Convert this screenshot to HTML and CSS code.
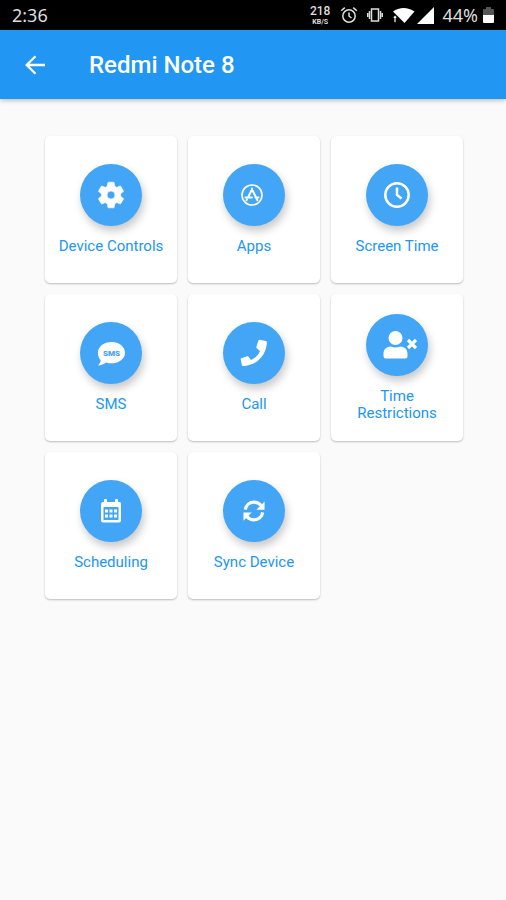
FILE: index.html
```html
<!DOCTYPE html>
<html lang="en">
<head>
<meta charset="utf-8">
<meta name="viewport" content="width=device-width, initial-scale=1">
<title>Redmi Note 8</title>
<link rel="stylesheet" href="styles.css">
</head>
<body>
<div class="status">
  <span class="clock">2:36</span>
  <div class="status-icons">
    <span class="speed"><b>218</b><small>KB/S</small></span>
    <svg class="alarm" width="18" height="18" viewBox="0 0 18 18" fill="none" stroke="#ddd" stroke-width="1.5"><circle cx="9" cy="10" r="6.2"/><path d="M9 6.5V10l2.500 2M1.200 4.800 4.800 1.600M16.800 4.800l-3.600-3.200"/></svg>
    <svg class="vibrate" width="16" height="18" viewBox="0 0 16 18" fill="none" stroke="#ddd" stroke-width="1.500"><rect x="4.500" y="3" width="7" height="12"/><path d="M2.500 5v8M13.500 5v8M.7 7v4M15.300 7v4"/></svg>
    <svg class="wifi" width="23" height="18" viewBox="0 0 23 18" fill="#fff"><path d="M1 5.500C7 .8 16 .8 22.500 5.500L12.500 17Z"/><path d="M3 9 5.500 12H4v4.500H2V12H.5Z" stroke="#000" stroke-width=".8"/></svg>
    <svg class="signal" width="17" height="17" viewBox="0 0 17 17" fill="#fff"><path d="M17 0v17H0Z"/></svg>
    <span class="percent">44%</span>
    <svg class="battery" width="11" height="18" viewBox="0 0 11 18"><path d="M3 1h5v2h2q1 0 1 1v6H0V4q0-1 1-1h2Z" fill="#555"/><path d="M0 9h11v7q0 1-1 1H1q-1 0-1-1Z" fill="#fff"/></svg>
  </div>
</div>
<header class="appbar">
  <button class="back" type="button" aria-label="Back"><svg width="22" height="22" viewBox="0 0 22 22" fill="none" stroke="#fff" stroke-width="2.300"><path d="M21 11H3M11.500 2.200 2.700 11l8.800 8.800"/></svg></button>
  <h1>Redmi Note 8</h1>
</header>
<main class="grid">
  <button class="card" type="button">
    <span class="disc"><svg width="32" height="32" viewBox="0 0 24 24" fill="#fff"><path d="M19.140 12.940c.04-.3.060-.61.060-.94s-.02-.64-.070-.94l2.030-1.580a.49.49 0 0 0 .12-.61l-1.920-3.320a.49.49 0 0 0-.59-.22l-2.390.96a7 7 0 0 0-1.620-.94L14.400 2.810a.48.48 0 0 0-.48-.41h-3.840a.47.47 0 0 0-.47.41l-.36 2.540a7.300 7.300 0 0 0-1.620.94l-2.390-.96a.48.48 0 0 0-.59.22L2.740 8.870a.47.47 0 0 0 .12.61l2.030 1.580a7 7 0 0 0 0 1.880l-2.030 1.580a.49.49 0 0 0-.12.61l1.920 3.320c.12.22.37.29.59.22l2.390-.96c.5.38 1.030.7 1.620.94l.36 2.540c.05.24.24.41.48.41h3.840c.24 0 .44-.17.47-.41l.36-2.540a7 7 0 0 0 1.620-.94l2.390.96c.22.080.47 0 .59-.22l1.920-3.320a.47.47 0 0 0-.12-.61ZM12 15a3 3 0 1 1 0-6 3 3 0 0 1 0 6Z" stroke="#fff" stroke-width=".5"/></svg></span>
    <span class="label">Device Controls</span>
  </button>
  <button class="card" type="button">
    <span class="disc apps"><svg width="24" height="24" viewBox="0 0 24 24" fill="none" stroke="#fff" stroke-linecap="round"><circle cx="12" cy="12" r="10" stroke-width="1.600"/><path d="M12 5.500v2M11.400 7.500 8 14.500M12.600 7.500l4 8M5.500 14.500h6.500M15.500 14.500h3M7 16.500l-.5.800M16.800 16.200l.6 1" stroke-width="2"/></svg></span>
    <span class="label">Apps</span>
  </button>
  <button class="card" type="button">
    <span class="disc"><svg width="28" height="28" viewBox="0 0 28 28" fill="none" stroke="#fff" stroke-width="2.500"><circle cx="14" cy="14" r="11.700"/><path d="M14 6.500V14l4.500 3.500"/></svg></span>
    <span class="label">Screen Time</span>
  </button>
  <button class="card" type="button">
    <span class="disc"><svg width="28" height="28" viewBox="0 0 28 28"><path d="M14.500 3C22 3 28 7.600 28 13.700S22 24.300 14.500 24.300c-2 0-3.900-.3-5.600-.9C6.800 25 4.100 26.300 1 26.500c1.400-1.500 2.500-3.300 2.800-5C2 19.400.9 17 .9 13.700.9 7.600 7 3 14.500 3Z" fill="#fff"/><text class="sms" x="14.500" y="16.500" text-anchor="middle">SMS</text></svg></span>
    <span class="label">SMS</span>
  </button>
  <button class="card" type="button">
    <span class="disc"><svg width="28" height="28" viewBox="0 0 28 28" fill="#fff"><path d="M18.500 1.300q.4-.9 1.200-.6l6.200 1.400q.9.200 1 1.100C26.500 16 16.500 27 3 27q-.9 0-1.100-.9L.7 20.500q-.2-.9.600-1.200l6-2q.8-.3 1.300.4l2.400 3.300c4.300-1.800 7.300-4.800 9-9L16.700 9.200q-.6-.6-.3-1.400Z"/></svg></span>
    <span class="label">Call</span>
  </button>
  <button class="card" type="button">
    <span class="disc"><svg class="user" width="34" height="28" viewBox="0 0 34 28" fill="#fff"><circle cx="12.500" cy="7" r="7"/><path d="M8 15.500q4.500 2 9 0c4.500 0 7.500 3 7.500 7.300v2.500q0 2.200-2.200 2.200H2.700Q.5 27.500.5 25.300v-2.500c0-4.300 3-7.300 7.500-7.300Z"/><path d="m25 9 8 8m0-8-8 8" stroke="#fff" stroke-width="3.200"/></svg></span>
    <span class="label">Time Restrictions</span>
  </button>
  <button class="card" type="button">
    <span class="disc"><svg width="22" height="24" viewBox="0 0 22 24"><path d="M4 3V1q0-1 1-1h1q1 0 1 1v2h8V1q0-1 1-1h1q1 0 1 1v2h1.500Q21 3 21 5v16.500q0 2-2 2H3q-2 0-2-2V5q0-2 2-2ZM3.500 8v12.500q0 .5.500.5h14q.5 0 .5-.5V8Z" fill="#fff" fill-rule="evenodd"/><path d="M5 10.500h3v3H5Zm4.500 0h3v3h-3Zm4.500 0h3v3h-3ZM5 15.500h3v3H5Zm4.500 0h3v3h-3Zm4.500 0h3v3h-3Z" fill="#fff"/></svg></span>
    <span class="label">Scheduling</span>
  </button>
  <button class="card" type="button">
    <span class="disc"><svg width="22" height="22" viewBox="0 0 24 24"><path d="M2.500 10.500C3.300 5.500 7.300 2.300 12 2.300c3 0 5.600 1.200 7.500 3.500M21.500 13.500c-.8 5-4.800 8.200-9.500 8.200-3 0-5.600-1.200-7.500-3.500" fill="none" stroke="#fff" stroke-width="3.500"/><path d="M23.500 1.500v9h-9ZM.5 22.500v-9h9Z" fill="#fff"/></svg></span>
    <span class="label">Sync Device</span>
  </button>
</main>
</body>
</html>
```
FILE: styles.css
```css
* { box-sizing: border-box; }

body {
  margin: 0;
  min-height: 100vh;
  background: #fafafa;
  font-family: Roboto, "Liberation Sans", sans-serif;
}

button {
  border: 0;
  padding: 0;
  background: none;
  font: inherit;
  cursor: pointer;
}

.status {
  display: flex;
  align-items: center;
  justify-content: space-between;
  height: 30px;
  padding: 0 12px;
  background: #000;
  color: #ddd;
  font-family: "Noto Sans", Roboto, sans-serif;
  font-size: 18px;
}

.status-icons {
  display: flex;
  align-items: center;
}

.speed {
  display: flex;
  flex-direction: column;
  align-items: center;
  margin-right: 10px;
  font-family: Roboto, sans-serif;
}

.speed b {
  font-size: 12px;
  line-height: 14px;
  font-weight: 500;
}

.speed small {
  font-size: 7px;
  line-height: 8px;
  font-weight: 700;
}

.alarm { margin-right: 9px; }
.vibrate { margin-right: 9px; }
.wifi { margin-right: 2px; }
.signal { margin-right: 8px; }
.percent { margin-right: 5px; }

.appbar {
  display: flex;
  align-items: center;
  gap: 43px;
  height: 69px;
  padding: 0 24px;
  background: #2196f3;
  box-shadow: 0 1px 5px rgba(0, 0, 0, 0.3);
}

.back { display: flex; }

h1 {
  margin: 0;
  color: #fff;
  font-size: 24px;
  line-height: 28px;
  font-weight: 500;
}

.grid {
  display: grid;
  grid-template-columns: repeat(3, 1fr);
  grid-auto-rows: 147px;
  gap: 11px;
  padding: 37px 43px 37px 45px;
}

.card {
  display: flex;
  flex-direction: column;
  align-items: center;
  justify-content: center;
  gap: 12px;
  padding: 0 12px;
  border-radius: 5px;
  background: #fff;
  box-shadow: 0 1px 2px rgba(0, 0, 0, 0.25);
}

.disc {
  display: flex;
  align-items: center;
  justify-content: center;
  width: 62px;
  height: 62px;
  border-radius: 50%;
  background: #42a5f5;
  box-shadow: 2px 5px 9px rgba(0, 0, 0, 0.22);
}

.apps { padding-right: 4px; }

.user { margin-left: 5px; }

.sms {
  fill: #42a5f5;
  font: 900 8px Roboto, sans-serif;
}

.label {
  color: #2196f3;
  font-size: 15px;
  line-height: 17px;
  text-align: center;
}
```
